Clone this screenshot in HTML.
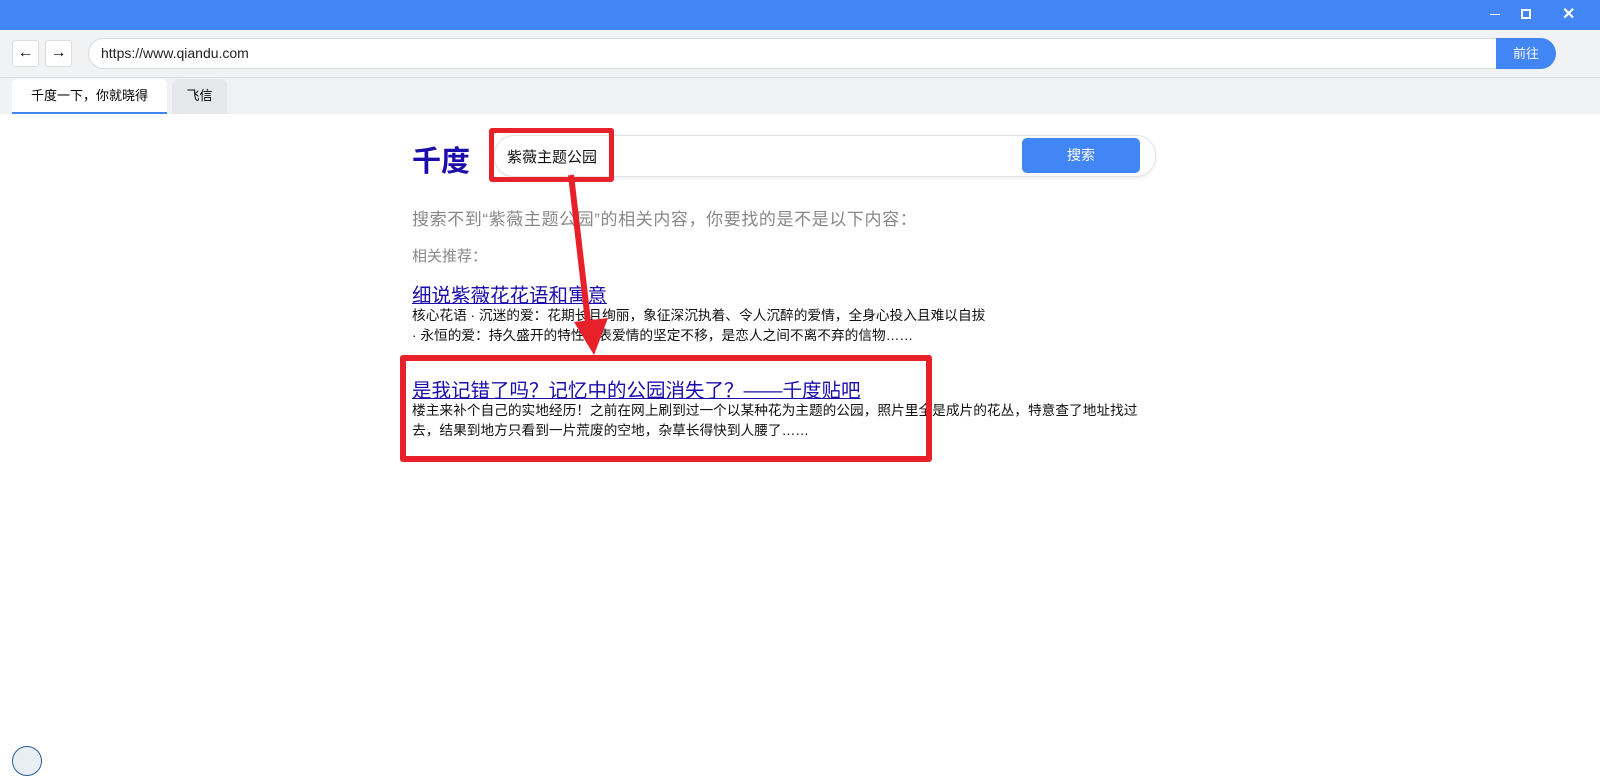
<!DOCTYPE html>
<html><head><meta charset="utf-8"><style>
*{margin:0;padding:0;box-sizing:border-box}
body{width:1600px;height:767px;overflow:hidden;background:#fff;font-family:"Liberation Sans","Noto Sans CJK SC",sans-serif;position:relative}
.top{position:absolute;left:0;top:0;width:1600px;height:30px;background:#4285f4}
.bar{position:absolute;top:30px;left:0;width:1600px;height:48px;background:#f1f2f4;border-bottom:1px solid #dcdde0}
.nb{position:absolute;top:10px;width:27px;height:27px;background:#fff;border:1px solid #dcdde0;border-radius:3px;font-size:16px;text-align:center;line-height:24px}
.url{position:absolute;left:88px;top:8px;width:1420px;height:31px;background:#fff;border:1px solid #d8d9dc;border-radius:16px 0 0 16px;font-size:14px;line-height:29px;padding-left:12px;color:#222}
.go{position:absolute;left:1496px;top:8px;width:60px;height:31px;background:#4285f4;border-radius:0 16px 16px 0;color:#fff;font-size:13px;line-height:31px;text-align:center}
.tabs{position:absolute;top:78px;left:0;width:1600px;height:36px;background:#f1f2f4}
.tab{position:absolute;top:1px;height:35px;font-size:13px;line-height:34px;text-align:center;border-radius:6px 6px 0 0}
.abs{position:absolute}
a{color:#1a0dab;text-decoration:underline}
</style></head><body>
<div class="top">
<div class="abs" style="left:1490px;top:14px;width:10px;height:1px;background:#fff"></div>
<div class="abs" style="left:1521px;top:9px;width:10px;height:10px;border:2px solid #fff"></div>
<div class="abs" style="left:1562px;top:4px;color:#fff;font-size:16px;font-weight:bold">✕</div>
</div>
<div class="bar">
<div class="nb" style="left:12px">←</div>
<div class="nb" style="left:45px">→</div>
<div class="url">https://www.qiandu.com</div>
<div class="go">前往</div>
</div>
<div class="tabs">
<div class="tab" style="left:12px;width:155px;background:#fff;border-bottom:2px solid #4285f4">千度一下，你就晓得</div>
<div class="tab" style="left:172px;width:55px;background:#e6e7ea">飞信</div>
</div>
<div class="abs" style="left:412px;top:138px;font-size:29px;font-weight:bold;color:#1a0dab">千度</div>
<div class="abs" style="left:494px;top:135px;width:662px;height:42px;border:1px solid #e4e4e4;border-radius:20px;box-shadow:0 1px 3px #e8e8e8"></div>
<div class="abs" style="left:507px;top:146px;font-size:15px;color:#111">紫薇主题公园</div>
<div class="abs" style="left:1022px;top:138px;width:118px;height:35px;background:#4285f4;border-radius:5px;color:#fff;font-size:14px;line-height:35px;text-align:center">搜索</div>
<div class="abs" style="left:412px;top:205px;font-size:17px;letter-spacing:0.6px;color:#888;white-space:nowrap">搜索不到“紫薇主题公园”的相关内容，你要找的是不是以下内容：</div>
<div class="abs" style="left:412px;top:245px;font-size:15px;color:#888">相关推荐：</div>
<div class="abs" style="left:412px;top:279px;font-size:19.5px;white-space:nowrap"><a>细说紫薇花花语和寓意</a></div>
<div class="abs" style="left:412px;top:306px;font-size:13.7px;line-height:20px;color:#111;white-space:nowrap">核心花语 · 沉迷的爱：花期长且绚丽，象征深沉执着、令人沉醉的爱情，全身心投入且难以自拔<br>· 永恒的爱：持久盛开的特性代表爱情的坚定不移，是恋人之间不离不弃的信物……</div>
<div class="abs" style="left:412px;top:374px;font-size:19.5px;white-space:nowrap"><a>是我记错了吗？记忆中的公园消失了？——千度贴吧</a></div>
<div class="abs" style="left:412px;top:401px;width:745px;font-size:13.7px;line-height:20px;color:#111">楼主来补个自己的实地经历！之前在网上刷到过一个以某种花为主题的公园，照片里全是成片的花丛，特意查了地址找过去，结果到地方只看到一片荒废的空地，杂草长得快到人腰了……</div>
<div class="abs" style="left:489px;top:128px;width:125px;height:54px;border:5px solid #e8202a;border-radius:3px"></div>
<div class="abs" style="left:400px;top:355px;width:532px;height:107px;border:6px solid #e8202a;border-radius:3px"></div>
<svg class="abs" style="left:0;top:0" width="1600" height="767"><line x1="571" y1="175" x2="589" y2="330" stroke="#e8202a" stroke-width="6"/><polygon points="574,322 608,318 594,355" fill="#e8202a"/></svg>
<div class="abs" style="left:12px;top:746px;width:30px;height:30px;border-radius:50%;border:1px solid #2a5d99;background:#e9eef4"></div>
</body></html>
